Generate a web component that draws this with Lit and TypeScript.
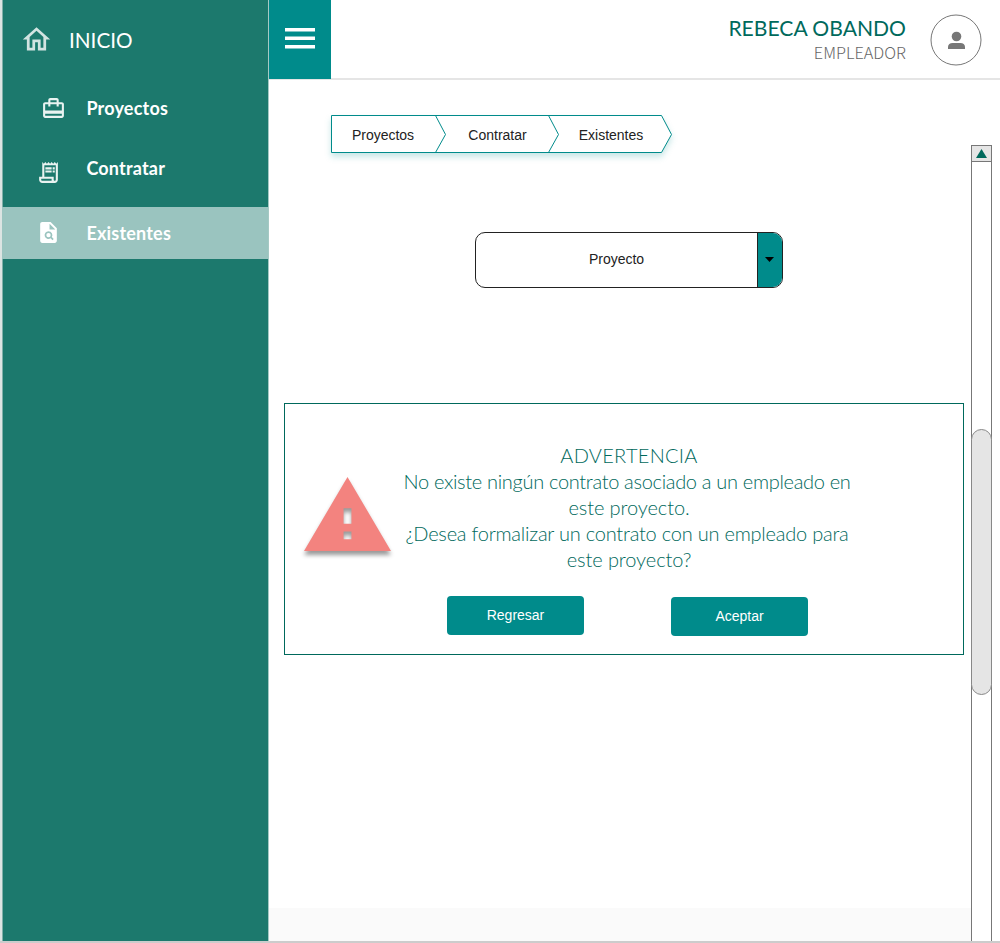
import { LitElement, html, css, svg } from "lit";
import { customElement, property } from "lit/decorators.js";

const icons: Record<string, unknown> = {
  home: svg`<path d="M12 5.69 17 10.19V18H15V12H9V18H7V10.19ZM12 3 2 12H5V20H11V14H13V20H19V12H22Z"/>`,
  projects: svg`<path d="M20 6h-3V4c0-1.11-.89-2-2-2H9c-1.11 0-2 .89-2 2v2H4c-1.11 0-2 .89-2 2v11c0 1.11.89 2 2 2h16c1.11 0 2-.89 2-2V8c0-1.11-.89-2-2-2zM9 4h6v2H9V4zm11 15H4v-2h16v2zm0-5H4V8h3v2h2V8h6v2h2V8h3v6z"/>`,
  receipt: svg`<path d="M19.5 3.5 18 2l-1.5 1.5L15 2l-1.5 1.5L12 2l-1.5 1.5L9 2 7.5 3.5 6 2v14H3v3c0 1.66 1.34 3 3 3h12c1.66 0 3-1.34 3-3V2l-1.5 1.5zM15 20H6c-.55 0-1-.45-1-1v-1h10v2zm4-1c0 .55-.45 1-1 1s-1-.45-1-1v-3H8V5h11v14z"/><path d="M9 7h6v2H9zM16 7h2v2h-2zM9 10h6v2H9zM16 10h2v2h-2z"/>`,
  search: svg`<path fill-rule="evenodd" d="M6 2C4.900 2 4 2.900 4 4v16c0 1.100.900 2 2 2h12c1.100 0 2-.900 2-2V8l-6-6zM13 3.500V9h5.500zM12 10.800a3.700 3.700 0 1 0 2 6.800l1.800 1.800 1.200-1.200-1.800-1.800A3.700 3.700 0 0 0 12 10.800zm0 1.600a2.100 2.100 0 1 1 0 4.200 2.100 2.100 0 0 1 0-4.200z"/>`,
};

@customElement("side-item")
class SideItem extends LitElement {
  @property() icon = "";
  @property() label = "";

  static styles = css`
    :host { display: flex; align-items: center; height: 52px; box-sizing: border-box; color: #fff; padding-left: 39px; font: 700 18px/26px Lato, sans-serif; letter-spacing: 0.2px; }
    :host([active]) { background: #9ac4bf; }
    .glyph { width: 25px; height: 25px; fill: #e9f3f1; flex: none; }
    .receipt { margin: 8px 5px 0 -5px; }
    .search { margin: 0 5px 1px -5px; fill: #fff; }
    .label { margin-left: 20.400px; }
  `;

  render() {
    return html`<svg class="glyph ${this.icon}" viewBox="0 0 24 24">${icons[this.icon]}</svg>
      <span class="label">${this.label}</span>`;
  }
}

@customElement("crumb-trail")
class CrumbTrail extends LitElement {
  static styles = css`
    :host { display: grid; width: 342px; height: 39px; font: 14px/16px "Liberation Sans", Arial, sans-serif; color: #222; }
    .shape, .labels { grid-area: 1 / 1; }
    .shape { overflow: visible; filter: drop-shadow(0 4px 3px rgba(0, 139, 139, 0.22)); }
    .labels { display: grid; grid-template-columns: 104px 125px 102px; z-index: 1; align-items: center; text-align: center; }
  `;
  render() {
    return html`<svg class="shape" width="342" height="39" viewBox="0 0 342 39" fill="#fff" stroke="#008b8b">
        <path d="M.5.500H330.500L340.500 19.500 330.500 37.500H.500Z"/>
        <path fill="none" d="M104.500.500 114.500 19.500 104.500 37.500M217.500.500 227.500 19.500 217.500 37.500"/>
      </svg>
      <div class="labels"><span>Proyectos</span><span>Contratar</span><span>Existentes</span></div>`;
  }
}

@customElement("app-root")
class AppRoot extends LitElement {
  static styles = css`
    :host { display: grid; grid-template-columns: 269px 1fr; width: 1000px; height: 943px; box-sizing: border-box; background: #fff; border-bottom: 2px solid #ccc; overflow: hidden; }
    .side { background: #1c796d; border-left: 2px solid #dce4e2; border-right: 1px solid #a5c9c4; box-shadow: inset 1px 0 #7fafa8; }
    .home { display: flex; height: 82px; color: #fff; font: 400 20.700px/26px Lato, sans-serif; align-items: center; padding-left: 18px; }
    .home svg { width: 33px; height: 33px; fill: #d2e4e2; margin-bottom: 4px; }
    .home span { margin: 0 0 2px 16px; }
    .nav { display: flex; flex-direction: column; }
    .nav .second { margin: 8px 0 13px; }
    .page { display: flex; flex-direction: column; min-width: 0; }
    .bar { display: flex; height: 80px; box-sizing: border-box; border-bottom: 2px solid #e5e5e5; }
    .menu { width: 62px; height: 79px; background: #008b8b; border: 0; padding: 0; }
    .menu svg { display: block; margin: -3px auto 0; }
    .who { margin: 14px 24px 0 auto; text-align: right; }
    .name { font: 400 21.100px/27px Lato, sans-serif; color: #00695c; }
    .role { font: 300 16.300px/22px "Noto Sans CJK JP", "Noto Sans", sans-serif; color: #666; }
    .avatar { margin: 14px 18px 0 0; width: 52px; height: 52px; }
    .body { flex: 1; display: grid; grid-template-columns: 702px 21px; min-height: 0; }
    .content { display: flex; flex-direction: column; }
    .trail { margin: 35px 0 0 62px; }
    .select { display: flex; margin: 78px 0 0 206px; width: 308px; height: 56px; box-sizing: border-box; border: 1px solid #222; border-radius: 10px; overflow: hidden; font: 14px/52px "Liberation Sans", Arial, sans-serif; color: #222; }
    .value { flex: 1; text-align: center; }
    .arrow { width: 24px; background: #008b8b; border-left: 1px solid #222; display: grid; place-items: center; box-sizing: content-box; }
    .arrow svg { margin: 0 1px 1px 0; }
    .alert { margin: 115px 0 0 15px; width: 680px; height: 252px; box-sizing: border-box; border: 1px solid #00695c; }
    .message { display: flex; padding: 38px 0 0 19px; }
    .sign { width: 87px; height: 74px; margin: 35px 0 0 0; overflow: visible; fill: #f3837f; filter: drop-shadow(0 4px 2px rgba(0, 0, 0, 0.4)); }
    .text { width: 478px; margin: 0 0 0 -1px; text-align: center; white-space: nowrap; font: 300 20px/26px Lato, sans-serif; color: #00695c; }
    .title { letter-spacing: 0.270px; }
    .line-a { letter-spacing: -0.310px; padding-right: 4px; }
    .line-b { letter-spacing: -0.220px; padding-right: 4px; }
    .short { letter-spacing: -0.080px; }
    .actions { display: flex; gap: 87px; padding: 24px 0 0 162px; }
    .btn { width: 137px; height: 39px; border: 0; border-radius: 4px; background: #008b8b; color: #fff; padding: 0 0 2px; font: 14px/16px "Liberation Sans", Arial, sans-serif; }
    .btn.ok { margin-top: 1px; }
    .foot { height: 33px; margin-top: auto; background: #fafafa; }
    .scroll { margin-top: 65px; border: 1px solid #777; border-bottom: 0; }
    .up { height: 15px; border-bottom: 1px solid #777; background: #e5e5e5; display: grid; place-items: center; }
    .thumb { margin: 267px -1px 0; height: 266px; box-sizing: border-box; border: 1px solid #888; border-radius: 11px; background: #e5e5e5; }
  `;

  render() {
    return html`
      <aside class="side">
        <div class="home"><svg viewBox="0 0 24 24">${icons.home}</svg><span>INICIO</span></div>
        <nav class="nav">
          <side-item icon="projects" label="Proyectos"></side-item>
          <side-item class="second" icon="receipt" label="Contratar"></side-item>
          <side-item icon="search" label="Existentes" active></side-item>
        </nav>
      </aside>
      <div class="page">
        <header class="bar">
          <button class="menu" aria-label="Menu"><svg width="30" height="21" fill="#fff"><path d="M0 0h30v3.500H0zM0 8.500h30V12H0zM0 17h30v3.500H0z"/></svg></button>
          <div class="who"><div class="name">REBECA OBANDO</div><div class="role">EMPLEADOR</div></div>
          <svg class="avatar" viewBox="0 0 52 52"><circle cx="26" cy="26" r="25" fill="none" stroke="#777"/><circle cx="26.500" cy="22.500" r="4.800" fill="#777"/><path fill="#777" d="M18 35v-2c0-2.500 2-4 4.500-4h8c2.500 0 4.500 1.500 4.500 4v2z"/></svg>
        </header>
        <div class="body">
          <main class="content">
            <crumb-trail class="trail"></crumb-trail>
            <div class="select"><span class="value">Proyecto</span><span class="arrow"><svg width="9" height="5"><path d="M0 0h9L4.500 5z"/></svg></span></div>
            <section class="alert">
              <div class="message">
                <svg class="sign" viewBox="1 2 22 19" preserveAspectRatio="none"><path d="M1 21h22L12 2 1 21zm12-3h-2v-2h2v2zm0-4h-2v-4h2v4z"/></svg>
                <div class="text">
                  <div class="title">ADVERTENCIA</div>
                  <div class="line-a">No existe ningún contrato asociado a un empleado en</div>
                  <div class="short">este proyecto.</div>
                  <div class="line-b">¿Desea formalizar un contrato con un empleado para</div>
                  <div class="short">este proyecto?</div>
                </div>
              </div>
              <div class="actions"><button class="btn">Regresar</button><button class="btn ok">Aceptar</button></div>
            </section>
            <div class="foot"></div>
          </main>
          <div class="scroll">
            <div class="up"><svg width="11" height="9" fill="#00695c"><path d="M5.500 0 11 9H0z"/></svg></div>
            <div class="thumb"></div>
          </div>
        </div>
      </div>`;
  }
}
